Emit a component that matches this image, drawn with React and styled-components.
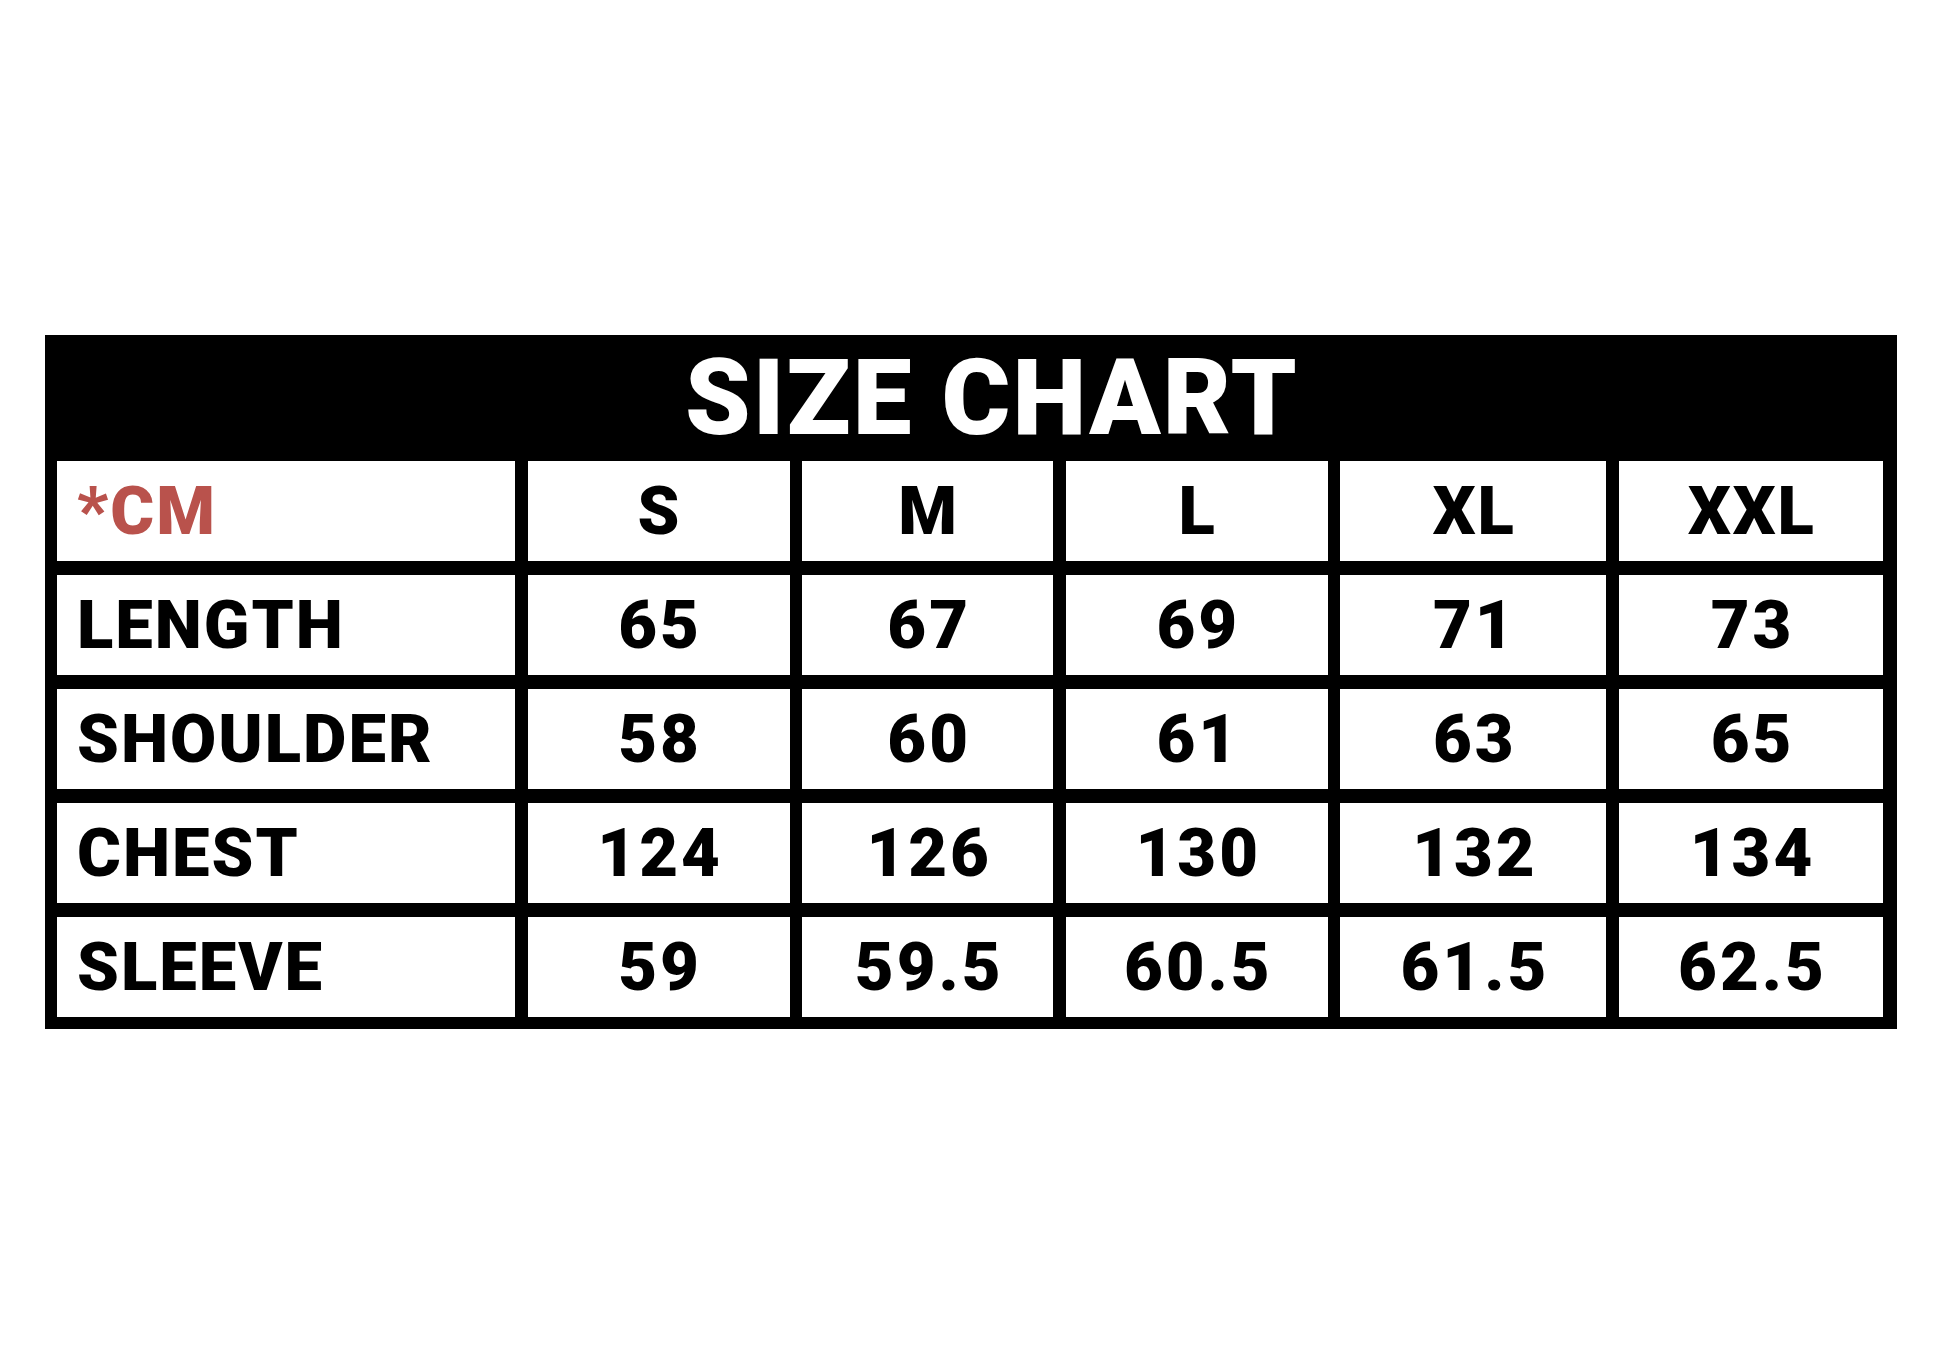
import React from "react";
import styled, { createGlobalStyle } from "styled-components";

const GlobalStyle = createGlobalStyle`
  html, body {
    margin: 0;
    padding: 0;
    background: #ffffff;
  }
  body {
    font-family: Roboto, "Liberation Sans", Arial, sans-serif;
  }
`;

const sizes = ["S", "M", "L", "XL", "XXL"];

const rows = [
  { label: "LENGTH", values: ["65", "67", "69", "71", "73"] },
  { label: "SHOULDER", values: ["58", "60", "61", "63", "65"] },
  { label: "CHEST", values: ["124", "126", "130", "132", "134"] },
  { label: "SLEEVE", values: ["59", "59.5", "60.5", "61.5", "62.5"] },
];

export default function App() {
  return (
    <>
      <GlobalStyle />
      <Page>
        <Chart>
          <Title>SIZE CHART</Title>
          <Grid>
            <LabelCell>
              <Unit>*CM</Unit>
            </LabelCell>
            {sizes.map((s) => (
              <Cell key={s}>{s}</Cell>
            ))}
            {rows.map((row) => (
              <React.Fragment key={row.label}>
                <LabelCell>{row.label}</LabelCell>
                {row.values.map((v, i) => (
                  <Cell key={row.label + i} $numeric>
                    {v}
                  </Cell>
                ))}
              </React.Fragment>
            ))}
          </Grid>
        </Chart>
      </Page>
    </>
  );
}

const Page = styled.div`
  width: 1946px;
  height: 1359px;
  padding: 335px 0 0 45px;
  box-sizing: border-box;
  background: #ffffff;
`;

const Chart = styled.div`
  width: 1852px;
  box-sizing: border-box;
  background: #000000;
  padding: 0 14px 12px 12px;
`;

const Title = styled.div`
  height: 126px;
  display: flex;
  align-items: center;
  justify-content: center;
  padding-left: 44px;
  color: #ffffff;
  font-size: 105px;
  font-weight: 900;
  letter-spacing: 2px;
  line-height: 1;
`;

const Grid = styled.div`
  display: grid;
  grid-template-columns: 458px 262px 251px 262px 266px 264px;
  grid-auto-rows: 100px;
  column-gap: 12.6px;
  row-gap: 14px;
`;

const Cell = styled.div`
  background: #ffffff;
  color: #000000;
  display: flex;
  align-items: center;
  justify-content: center;
  font-size: 67px;
  font-weight: 900;
  line-height: 1;
  letter-spacing: ${(p) => (p.$numeric ? "3px" : "2px")};
  text-indent: ${(p) => (p.$numeric ? "3px" : "2px")};
`;

const LabelCell = styled(Cell)`
  justify-content: flex-start;
  padding-left: 20px;
  text-indent: 0;
`;

const Unit = styled.span`
  color: #b9524c;
`;
